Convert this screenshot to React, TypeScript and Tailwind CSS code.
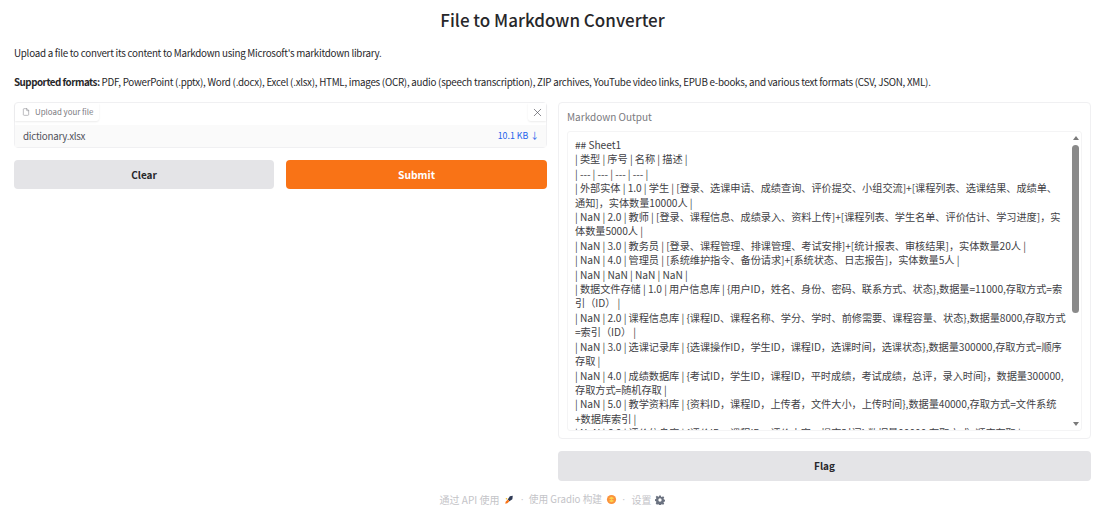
import { File, X } from 'lucide-react';

const outputLines = [
  '## Sheet1',
  '| 类型 | 序号 | 名称 | 描述 |',
  '| --- | --- | --- | --- |',
  '| 外部实体 | 1.0 | 学生 | [登录、选课申请、成绩查询、评价提交、小组交流]+[课程列表、选课结果、成绩单、通知]，实体数量10000人 |',
  '| NaN | 2.0 | 教师 | [登录、课程信息、成绩录入、资料上传]+[课程列表、学生名单、评价估计、学习进度]，实体数量5000人 |',
  '| NaN | 3.0 | 教务员 | [登录、课程管理、排课管理、考试安排]+[统计报表、审核结果]，实体数量20人 |',
  '| NaN | 4.0 | 管理员 | [系统维护指令、备份请求]+[系统状态、日志报告]，实体数量5人 |',
  '| NaN | NaN | NaN | NaN |',
  '| 数据文件存储 | 1.0 | 用户信息库 | {用户ID，姓名、身份、密码、联系方式、状态},数据量=11000,存取方式=索引（ID） |',
  '| NaN | 2.0 | 课程信息库 | {课程ID、课程名称、学分、学时、前修需要、课程容量、状态},数据量8000,存取方式=索引（ID） |',
  '| NaN | 3.0 | 选课记录库 | {选课操作ID，学生ID，课程ID，选课时间，选课状态},数据量300000,存取方式=顺序存取 |',
  '| NaN | 4.0 | 成绩数据库 | {考试ID，学生ID，课程ID，平时成绩，考试成绩，总评，录入时间}，数据量300000,存取方式=随机存取 |',
  '| NaN | 5.0 | 教学资料库 | {资料ID，课程ID，上传者，文件大小，上传时间},数据量40000,存取方式=文件系统+数据库索引 |',
  '| NaN | 6.0 | 评价信息库 | {评价ID，课程ID，评价内容，提交时间},数据量90000,存取方式=顺序存取 |',
];

function ApiLogo() {
  return (
    <svg viewBox="0 0 12 12" className="h-[10px] w-[10px]">
      <path d="M7 1.5 10.5 1 10 5 6.5 7.5 4.5 5.5Z" fill="#2f3a55" />
      <path d="M4.5 5.5 6.5 7.5 4 10 1.5 10.5 2 8Z" fill="#f97316" />
      <circle cx="3" cy="4.5" r="1" fill="#fbbf24" />
    </svg>
  );
}

function GradioLogo() {
  return (
    <svg viewBox="0 0 12 12" className="h-[11px] w-[11px]">
      <circle cx="6" cy="6" r="5" fill="#fb923c" />
      <path d="M3 4.5 6 3l3 1.5L6 6 3 4.5Zm0 3L6 6l3 1.5L6 9 3 7.5Z" fill="#fcd34d" />
    </svg>
  );
}

function GearIcon() {
  return (
    <svg viewBox="0 0 24 24" className="h-[10px] w-[10px]" fill="#6b7280">
      <path d="M10 1h4l.6 3 2.2.9 2.6-1.7 2.8 2.8-1.7 2.6.9 2.2 3 .6v4l-3 .6-.9 2.2 1.7 2.6-2.8 2.8-2.6-1.7-2.2.9-.6 3h-4l-.6-3-2.2-.9-2.6 1.7L1.6 19.6l1.7-2.6-.9-2.2-3-.6v-4l3-.6.9-2.2L1.6 4.8 4.4 2l2.6 1.7L9.4 4Zm2 7a4 4 0 1 0 0 8 4 4 0 0 0 0-8Z" />
    </svg>
  );
}

export default function App() {
  return (
    <div className="flex h-[522px] flex-col overflow-hidden bg-white pl-[14px] pr-[7px] text-[9.8px] tracking-[-0.26px] text-[#27272a] font-['Noto_Sans_CJK_SC','Noto_Sans',sans-serif]">
      <h1 className="pt-[7px] text-center text-[17px] font-medium leading-[26px] tracking-normal text-[#27272a]">
        File to Markdown Converter
      </h1>
      <p className="mt-[11px] leading-[18px]">
        Upload a file to convert its content to Markdown using Microsoft's markitdown library.
      </p>
      <p className="mt-[11px] leading-[18px]">
        <strong className="font-bold tracking-[-0.5px]">Supported formats:</strong> PDF, PowerPoint (.pptx), Word (.docx), Excel (.xlsx), HTML, images (OCR), audio (speech transcription), ZIP archives, YouTube video links, EPUB e-books, and various text formats (CSV, JSON, XML).
      </p>

      <div className="mt-[11px] flex items-start gap-[11px]">
        <div className="flex w-[533px] flex-col gap-[12px]">
          <div className="relative rounded-[4px] border border-[#f0f0f2] bg-white">
            <div className="flex h-[18px] w-[84px] items-center gap-[5px] whitespace-nowrap rounded-br-[3px] pl-[7px] text-[7.9px] tracking-normal text-[#7a7a80] shadow-[0_1px_2px_rgba(0,0,0,0.08)]">
              <File className="h-[8px] w-[8px] shrink-0" strokeWidth={1.5} />
              Upload your file
            </div>
            <div className="absolute right-0 top-0 flex h-[18px] w-[18px] items-center justify-center rounded-bl-[3px] bg-white text-[#52525b] shadow-[0_1px_2px_rgba(0,0,0,0.08)]">
              <X className="h-[13px] w-[13px]" strokeWidth={1.25} />
            </div>
            <div className="mt-[4px] flex h-[22px] items-center justify-between bg-[#fafafa] pl-[8px] pr-[7px]">
              <span className="text-[#52525b]">dictionary.xlsx</span>
              <span className="text-[8.8px] tracking-normal text-[#2563eb]">10.1 KB ↓</span>
            </div>
          </div>
          <div className="flex gap-[12px] tracking-normal">
            <button className="h-[29px] w-[260px] rounded-[4px] bg-[#e4e4e7] text-[10px] font-bold text-[#27272a]">
              Clear
            </button>
            <button className="h-[29px] flex-1 rounded-[4px] bg-[#f97316] text-[10.3px] font-bold text-white">
              Submit
            </button>
          </div>
        </div>

        <div className="flex w-[533px] flex-col gap-[12px] tracking-normal">
          <div className="rounded-[4px] border border-[#f0f0f2] px-[8px] pb-[7px] pt-[7px]">
            <div className="text-[10px] leading-[14px] text-[#7a7a80]">Markdown Output</div>
            <div className="relative mt-[7px] h-[300px] overflow-hidden rounded-[3px] border border-[#f4f4f5] py-[6px] pl-[7px] pr-[11px]">
              <div className="w-[492px] text-[10.2px] leading-[14.4px] tracking-[-0.05px] text-[#3f3f46]">
                {outputLines.map((line) => (
                  <div key={line}>{line}</div>
                ))}
              </div>
              <div className="absolute right-[1px] top-0 flex h-full w-[9px] flex-col items-center bg-white pt-[4px]">
                <div className="h-0 w-0 border-x-[3px] border-b-[4px] border-x-transparent border-b-[#7a7a7a]" />
                <div className="mt-[5px] h-[168px] w-[7px] rounded-full bg-[#8a8a8a]" />
                <div className="mt-auto mb-[4px] h-0 w-0 border-x-[3px] border-t-[4px] border-x-transparent border-t-[#7a7a7a]" />
              </div>
            </div>
          </div>
          <button className="h-[30px] rounded-[4px] bg-[#e4e4e7] pb-[2px] text-[10px] font-bold text-[#27272a]">
            Flag
          </button>
        </div>
      </div>

      <div className="mt-[11px] flex items-center justify-center gap-[4px] text-[10px] tracking-normal text-[#c4c4c8]">
        <span className="mr-[1px]">通过 API 使用</span>
        <ApiLogo />
        <span className="ml-[2px] mr-[1px] font-['Liberation_Sans',sans-serif] leading-none">·</span>
        <span className="text-[9.7px]">使用 Gradio 构建</span>
        <GradioLogo />
        <span className="ml-[1px] mr-[2px] font-['Liberation_Sans',sans-serif] leading-none">·</span>
        <span>设置</span>
        <GearIcon />
      </div>
    </div>
  );
}
